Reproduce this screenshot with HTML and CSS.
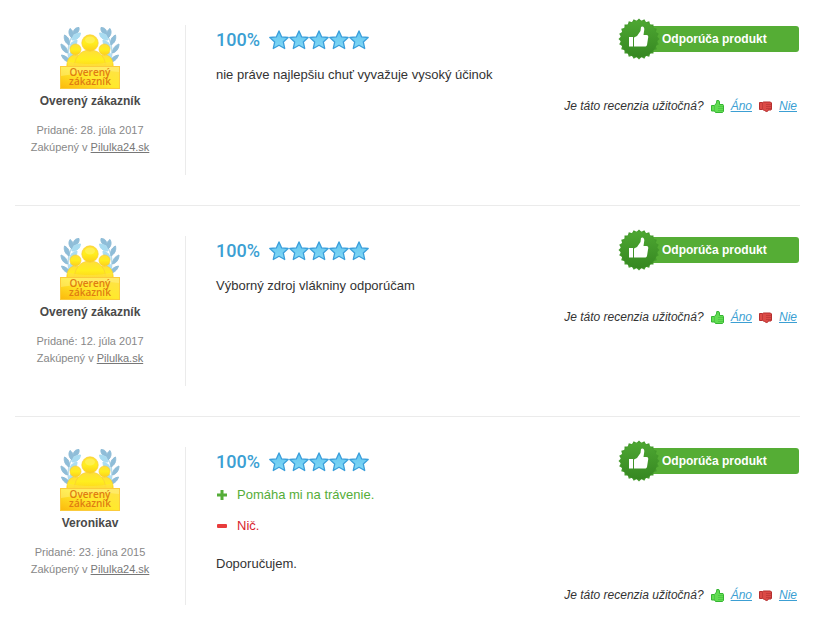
FILE: index.html
```
<!DOCTYPE html>
<html lang="sk">
<head>
    <meta charset="UTF-8">
    <meta name="viewport" content="width=device-width, initial-scale=1.0">
    <title>Recenzie</title>
    <link rel="stylesheet" href="styles.css">
</head>
<body>
    <!-- Shared icons -->
    <svg class="sprite" aria-hidden="true">
        <defs>
            <linearGradient id="star-fill" x1="0" y1="0" x2="0" y2="1">
                <stop offset="0" stop-color="#5fc4ef"/>
                <stop offset="1" stop-color="#84d9f6"/>
            </linearGradient>
            <linearGradient id="gold" x1="0" y1="0" x2="0" y2="1">
                <stop offset="0" stop-color="#ffdf3a"/>
                <stop offset="0.5" stop-color="#ffee1e"/>
                <stop offset="1" stop-color="#fdcf1a"/>
            </linearGradient>
            <linearGradient id="plate" x1="0" y1="1" x2="1" y2="0">
                <stop offset="0" stop-color="#fcb90c"/>
                <stop offset="0.5" stop-color="#ffe92c"/>
                <stop offset="1" stop-color="#ffe14a"/>
            </linearGradient>
            <linearGradient id="seal-fill" gradientUnits="userSpaceOnUse" x1="0" y1="0" x2="0" y2="42">
                <stop offset="0" stop-color="#4fa933"/>
                <stop offset="1" stop-color="#348520"/>
            </linearGradient>
            <symbol id="star" viewBox="0 0 20 20">
                <path d="M10 .9l2.700 6 6.500.6-4.900 4.400 1.400 6.600L10 15.200l-5.700 3.300 1.400-6.600L.8 7.500l6.500-.6z" fill="url(#star-fill)" stroke="#3a9fdb" stroke-width="1.300" stroke-linejoin="round"/>
            </symbol>
            <symbol id="stars" viewBox="0 0 100 20">
                <use href="#star" width="20" height="20"/>
                <use href="#star" x="20" width="20" height="20"/>
                <use href="#star" x="40" width="20" height="20"/>
                <use href="#star" x="60" width="20" height="20"/>
                <use href="#star" x="80" width="20" height="20"/>
            </symbol>
            <symbol id="laurel" viewBox="0 0 24 42">
                <path d="M16 7C9 13 6 25 10 38" fill="none" stroke="#b9dcec" stroke-width="1.500"/>
                <g fill="#8fbdd8" stroke="#8fbdd8">
                    <path d="M19 2.500c-4 0-6 2.500-5.500 6.500 4 0 6-2.500 5.500-6.500z"/>
                    <path d="M10 3.500c-2 3.500-1 7 2 9.500 2-4 1.500-7-2-9.500z"/>
                    <path d="M4.500 10c-1 4.500 1 8 4.500 10 1-4.500-.5-8-4.500-10z"/>
                    <path d="M1 19c0 4.500 2.500 8 6.500 9 0-4.500-2.500-7.500-6.500-9z"/>
                    <path d="M1.500 30c1 4 4.500 7 8.500 7-1-4-4.500-6.500-8.500-7z"/>
                </g>
                <g fill="#a9dcf1" stroke="#a9dcf1">
                    <path d="M20.500 8c-5 0-8 2.500-8.500 7 5 0 8-2.500 8.500-7z"/>
                    <path d="M17 15c-5 1-7.500 4-7 9 4.500-1 7-4 7-9z"/>
                    <path d="M14 25c-4 1.500-5.500 4.500-4.500 8.500 4-1.500 5-4.500 4.500-8.500z"/>
                </g>
            </symbol>
            <symbol id="verified" viewBox="0 0 64 66">
                <use href="#laurel" x="2" width="24" height="42"/>
                <use href="#laurel" width="24" height="42" transform="translate(62 0) scale(-1 1)"/>
                <g fill="url(#gold)" stroke="#f8cd35" stroke-width="0.700">
                    <path d="M9 44c-1-8 2-14 8.500-14S27 36 27 44z"/>
                    <path d="M37 44c0-8 3-14 9.500-14S56 36 55 44z"/>
                    <circle cx="17.500" cy="24.500" r="5.500"/>
                    <circle cx="46.500" cy="24.500" r="5.500"/>
                    <path d="M16 44c0-10 5-19 16-19s16 9 16 19z"/>
                    <circle cx="32" cy="18" r="8.200"/>
                </g>
                <ellipse cx="32" cy="15" rx="5" ry="3.500" fill="#fff56a" opacity="0.600"/>
                <path d="M10 36c9 4 34 4 44 0v5H10z" fill="#ffe14a" opacity="0.600"/>
                <rect x="2.500" y="41.500" width="59" height="22" fill="url(#plate)" stroke="#fbcb3c"/>
                <path d="M3 42h58v5C38 44 20 49 3 51z" fill="#fff59a" opacity="0.400"/>
                <text class="verified-text" x="32" y="51">Overený</text>
                <text class="verified-text" x="32" y="60">zákazník</text>
            </symbol>
            <symbol id="seal" viewBox="0 0 42 42">
                <!-- 6 rotated squares make 24 teeth -->
                <g fill="url(#seal-fill)">
                    <path id="tooth" d="M21 .5L41.500 21 21 41.500.5 21z" fill="#43992b"/>
                    <use href="#tooth" transform="rotate(15 21 21)"/>
                    <use href="#tooth" transform="rotate(30 21 21)"/>
                    <use href="#tooth" transform="rotate(45 21 21)"/>
                    <use href="#tooth" transform="rotate(60 21 21)"/>
                    <use href="#tooth" transform="rotate(75 21 21)"/>
                    <circle cx="21" cy="21" r="18.500"/>
                </g>
                <path d="M11 19h4v9.500h-4zM16 19.500l3-1.500 3.500-5 .5-4c1.500-1.500 3.500 0 3.300 2.500L25.500 17H28.500c2 0 2 2 1.500 3.500L29 27c-.5 1.300-1 1.500-2.500 1.500H16z" fill="#fff"/>
            </symbol>
            <symbol id="thumb-up" viewBox="0 0 13 13">
                <path d="M.5 5.500h3L5.500 3l.3-2.500h2L8.500 2v2.500h3.500l.5 1v6l-1 1h-7l-1-1.500h-3z" fill="#62dc52" stroke="#35b532"/>
                <path d="M3.500 6v5M7 6.500h5M7 8.500h5M7 10.500h5" stroke="#3fbd3a" stroke-width="0.600"/>
            </symbol>
            <symbol id="thumb-down" viewBox="0 0 13 13">
                <path d="M.5 2.500h3l1-.5h7l1 1v6l-.5 1H9v.8l-.7.700h-1L5.500 10.500 3.500 9.500h-3z" fill="#dc4a46" stroke="#b52e2e"/>
                <path d="M3.500 3v6M7 4.500h5M7 6.500h5M7 8.500h5" stroke="#b03030" stroke-width="0.600"/>
            </symbol>
        </defs>
    </svg>

    <main class="reviews">
        <article class="review">
            <div class="author">
                <svg class="author-badge"><use href="#verified"/></svg>
                <h3 class="author-name">Overený zákazník</h3>
                <p class="author-meta">Pridané: 28. júla 2017</p>
                <p class="author-meta">Zakúpený v <a href="#">Pilulka24.sk</a></p>
            </div>
            <div class="content">
                <div class="content-head">
                    <div class="rating">
                        <span class="rating-value">100%</span>
                        <svg class="rating-stars"><use href="#stars"/></svg>
                    </div>
                    <div class="recommend"><svg class="seal"><use href="#seal"/></svg>Odporúča produkt</div>
                </div>
                <p class="text">nie práve najlepšiu chuť vyvažuje vysoký účinok</p>
                <div class="votes">
                    <span>Je táto recenzia užitočná?</span>
                    <svg class="thumb"><use href="#thumb-up"/></svg>
                    <a href="#">Áno</a>
                    <svg class="thumb"><use href="#thumb-down"/></svg>
                    <a href="#">Nie</a>
                </div>
            </div>
        </article>

        <article class="review">
            <div class="author">
                <svg class="author-badge"><use href="#verified"/></svg>
                <h3 class="author-name">Overený zákazník</h3>
                <p class="author-meta">Pridané: 12. júla 2017</p>
                <p class="author-meta">Zakúpený v <a href="#">Pilulka.sk</a></p>
            </div>
            <div class="content">
                <div class="content-head">
                    <div class="rating">
                        <span class="rating-value">100%</span>
                        <svg class="rating-stars"><use href="#stars"/></svg>
                    </div>
                    <div class="recommend"><svg class="seal"><use href="#seal"/></svg>Odporúča produkt</div>
                </div>
                <p class="text">Výborný zdroj vlákniny odporúčam</p>
                <div class="votes">
                    <span>Je táto recenzia užitočná?</span>
                    <svg class="thumb"><use href="#thumb-up"/></svg>
                    <a href="#">Áno</a>
                    <svg class="thumb"><use href="#thumb-down"/></svg>
                    <a href="#">Nie</a>
                </div>
            </div>
        </article>

        <article class="review">
            <div class="author">
                <svg class="author-badge"><use href="#verified"/></svg>
                <h3 class="author-name">Veronikav</h3>
                <p class="author-meta">Pridané: 23. júna 2015</p>
                <p class="author-meta">Zakúpený v <a href="#">Pilulka24.sk</a></p>
            </div>
            <div class="content">
                <div class="content-head">
                    <div class="rating">
                        <span class="rating-value">100%</span>
                        <svg class="rating-stars"><use href="#stars"/></svg>
                    </div>
                    <div class="recommend"><svg class="seal"><use href="#seal"/></svg>Odporúča produkt</div>
                </div>
                <ul class="points">
                    <li class="plus">
                        <svg class="point-icon" viewBox="0 0 10 10"><path d="M3.500 0h3v3.500H10v3H6.500V10h-3V6.500H0v-3h3.500z" fill="#55ad38"/></svg>
                        Pomáha mi na trávenie.
                    </li>
                    <li class="minus">
                        <svg class="point-icon" viewBox="0 0 10 10"><rect y="3" width="10" height="4" rx="1" fill="#e83c3c"/></svg>
                        Nič.
                    </li>
                </ul>
                <p class="text">Doporučujem.</p>
                <div class="votes">
                    <span>Je táto recenzia užitočná?</span>
                    <svg class="thumb"><use href="#thumb-up"/></svg>
                    <a href="#">Áno</a>
                    <svg class="thumb"><use href="#thumb-down"/></svg>
                    <a href="#">Nie</a>
                </div>
            </div>
        </article>
    </main>
</body>
</html>
```
FILE: styles.css
```
* {
    margin: 0;
    padding: 0;
    box-sizing: border-box;
}

body {
    font-family: Arial, "Liberation Sans", sans-serif;
    font-size: 13px;
    line-height: 20px;
    color: #333;
    background: #fff;
}

.sprite {
    position: absolute;
    width: 0;
    height: 0;
}

.reviews {
    padding: 25px 22px 20px 15px;
}

.review {
    display: flex;
    gap: 30px;
}

.review + .review {
    margin-top: 30px;
    padding-top: 30px;
    border-top: 1px solid #ebebeb;
}

/* Left column */
.author {
    flex: 0 0 171px;
    min-height: 150px;
    padding-right: 20px;
    border-right: 1px solid #ebebeb;
    text-align: center;
}

.author-badge {
    display: block;
    width: 64px;
    height: 66px;
    margin: 0 auto;
}

.verified-text {
    font-family: "Open Sans", sans-serif;
    font-size: 10px;
    font-weight: 600;
    fill: #e07c12;
    text-anchor: middle;
}

.author-name {
    margin-bottom: 11px;
    font-size: 12px;
    color: #4a4a4a;
}

.author-meta {
    font-size: 11px;
    line-height: 17px;
    color: #888;
}

.author-meta a {
    color: #777;
}

/* Right column */
.content {
    flex: 1;
    display: flex;
    flex-direction: column;
}

.content-head {
    display: flex;
    justify-content: space-between;
    align-items: flex-start;
}

.rating {
    display: flex;
    align-items: center;
    gap: 9px;
    height: 30px;
}

.rating-value {
    font-family: Roboto, sans-serif;
    font-size: 18px;
    font-weight: 500;
    color: #3c9fd3;
}

.rating-stars {
    width: 100px;
    height: 20px;
}

.recommend {
    position: relative;
    width: 160px;
    margin: 1px 1px 0 0;
    padding-left: 23px;
    border-radius: 3px;
    background: #55ad35;
    font-size: 12px;
    font-weight: bold;
    line-height: 26px;
    color: #fff;
}

.seal {
    position: absolute;
    top: -8px;
    left: -21px;
    width: 42px;
    height: 42px;
}

.points {
    display: flex;
    flex-direction: column;
    gap: 11px;
    margin: 8px 0;
    list-style: none;
}

.points li {
    display: flex;
    align-items: center;
    gap: 10px;
    padding-left: 1px;
}

.point-icon {
    width: 10px;
    height: 10px;
}

.plus {
    color: #55ad38;
}

.minus {
    color: #d9232e;
}

.text {
    margin: 10px 0 11px;
}

.votes {
    display: flex;
    justify-content: flex-end;
    align-items: center;
    gap: 7px;
    padding-right: 3px;
    font-size: 12px;
    font-style: italic;
}

.votes a {
    color: #3c9fd3;
}

.thumb {
    width: 13px;
    height: 13px;
    margin-top: 1px;
}
```
